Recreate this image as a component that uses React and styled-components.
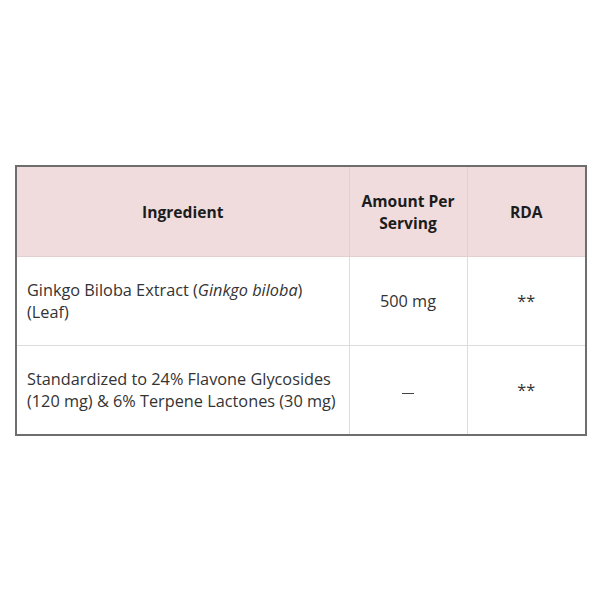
import React from 'react';
import styled, { createGlobalStyle } from 'styled-components';

const GlobalStyle = createGlobalStyle`
  html, body {
    margin: 0;
    padding: 0;
    background: #ffffff;
  }
  body {
    font-family: 'Open Sans', 'Noto Sans', sans-serif;
    color: #333333;
  }
`;

const Page = styled.main`
  width: 600px;
  height: 600px;
  box-sizing: border-box;
  padding: 165px 15px 0 15px;
`;

const Table = styled.table`
  width: 570px;
  border-collapse: collapse;
  table-layout: fixed;
  border: 2px solid #6e6e6e;
  line-height: 22px;
`;

const HeadCell = styled.th`
  height: 89px;
  padding: 0 10px;
  background: #f0dcdd;
  border: 1px solid #e2d0d1;
  font-size: 15.6px;
  font-weight: 700;
  color: #1c1c1c;
  text-align: center;
  vertical-align: middle;
`;

const Cell = styled.td`
  height: 88px;
  padding: ${({ $align }) => ($align === 'left' ? '0 2px 0 10px' : '0 10px')};
  border: 1px solid #dcdcdc;
  font-size: 16.3px;
  color: #333333;
  text-align: ${({ $align }) => $align || 'center'};
  vertical-align: middle;
`;

const Dash = styled.span`
  display: inline-block;
  width: 12px;
  height: 1.5px;
  background: #444444;
  vertical-align: middle;
  transform: translateY(2px);
`;

const rows = [
  {
    name: (
      <>
        Ginkgo Biloba Extract (<em>Ginkgo biloba</em>)
        <br />
        (Leaf)
      </>
    ),
    amount: '500 mg',
    rda: '**',
  },
  {
    name: (
      <>
        Standardized to 24% Flavone Glycosides
        <br />
        (120 mg) &amp; 6% Terpene Lactones (30 mg)
      </>
    ),
    amount: <Dash aria-label="none" />,
    rda: '**',
  },
];

const App = () => (
  <>
    <GlobalStyle />
    <Page>
      <Table>
        <colgroup>
          <col style={{ width: 333 }} />
          <col style={{ width: 118 }} />
          <col style={{ width: 119 }} />
        </colgroup>
        <thead>
          <tr>
            <HeadCell>Ingredient</HeadCell>
            <HeadCell>
              Amount Per
              <br />
              Serving
            </HeadCell>
            <HeadCell>RDA</HeadCell>
          </tr>
        </thead>
        <tbody>
          {rows.map((row, i) => (
            <tr key={i}>
              <Cell $align="left">{row.name}</Cell>
              <Cell>{row.amount}</Cell>
              <Cell>{row.rda}</Cell>
            </tr>
          ))}
        </tbody>
      </Table>
    </Page>
  </>
);

export default App;
